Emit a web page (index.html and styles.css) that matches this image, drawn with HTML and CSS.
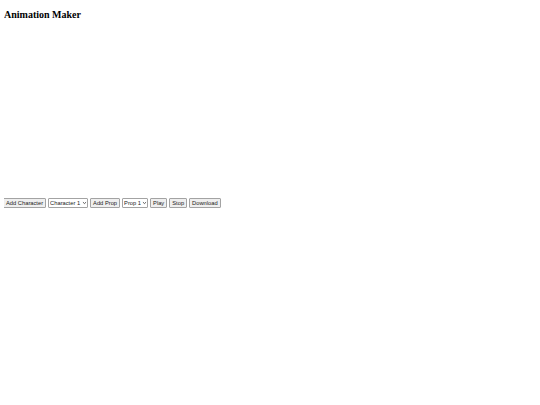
FILE: index.html
```html
<!DOCTYPE html>
<html>
<head>
<meta charset="utf-8">
<title>Animation Maker</title>
<link rel="stylesheet" href="styles.css">
</head>
<body>
<h1 class="title">Animation Maker</h1>
<div class="stage"></div>
<div class="controls">
  <button class="btn">Add Character</button>
  <select class="sel"><option>Character 1</option></select>
  <button class="btn">Add Prop</button>
  <select class="sel"><option>Prop 1</option></select>
  <button class="btn">Play</button>
  <button class="btn">Stop</button>
  <button class="btn">Download</button>
</div>
</body>
</html>
```
FILE: styles.css
```css
html, body {
  background: #ffffff;
}
body {
  margin: 4px;
  font-family: "Liberation Serif", serif;
}
.title {
  font-family: "Liberation Serif", serif;
  font-size: 10px;
  font-weight: bold;
  margin: 5px 0 7px;
  color: #000;
}
.stage {
  height: 171px;
}
.controls {
  display: flex;
  align-items: center;
  gap: 2px;
  margin-left: -1px;
}
.btn, .sel {
  font-family: "Liberation Sans", Arial, sans-serif;
  font-size: 5.75px;
  color: #1a1a1a;
  background: #efefef;
  border: 1px solid #a3a3a3;
  border-radius: 1px;
  padding: 0 2px;
  height: 10px;
  line-height: 7px;
  margin: 0;
}
.sel {
  -webkit-appearance: none;
  appearance: none;
  background-color: #fff;
  background-image: url("data:image/svg+xml;utf8,<svg xmlns='http://www.w3.org/2000/svg' width='8' height='6' viewBox='0 0 8 6'><path d='M1.5 1.5 L4 4 L6.5 1.5' fill='none' stroke='%23333' stroke-width='1.3'/></svg>");
  background-repeat: no-repeat;
  background-position: right 1px center;
  background-size: 4.5px 4px;
  padding: 0 6px 0 1px;
}
```
